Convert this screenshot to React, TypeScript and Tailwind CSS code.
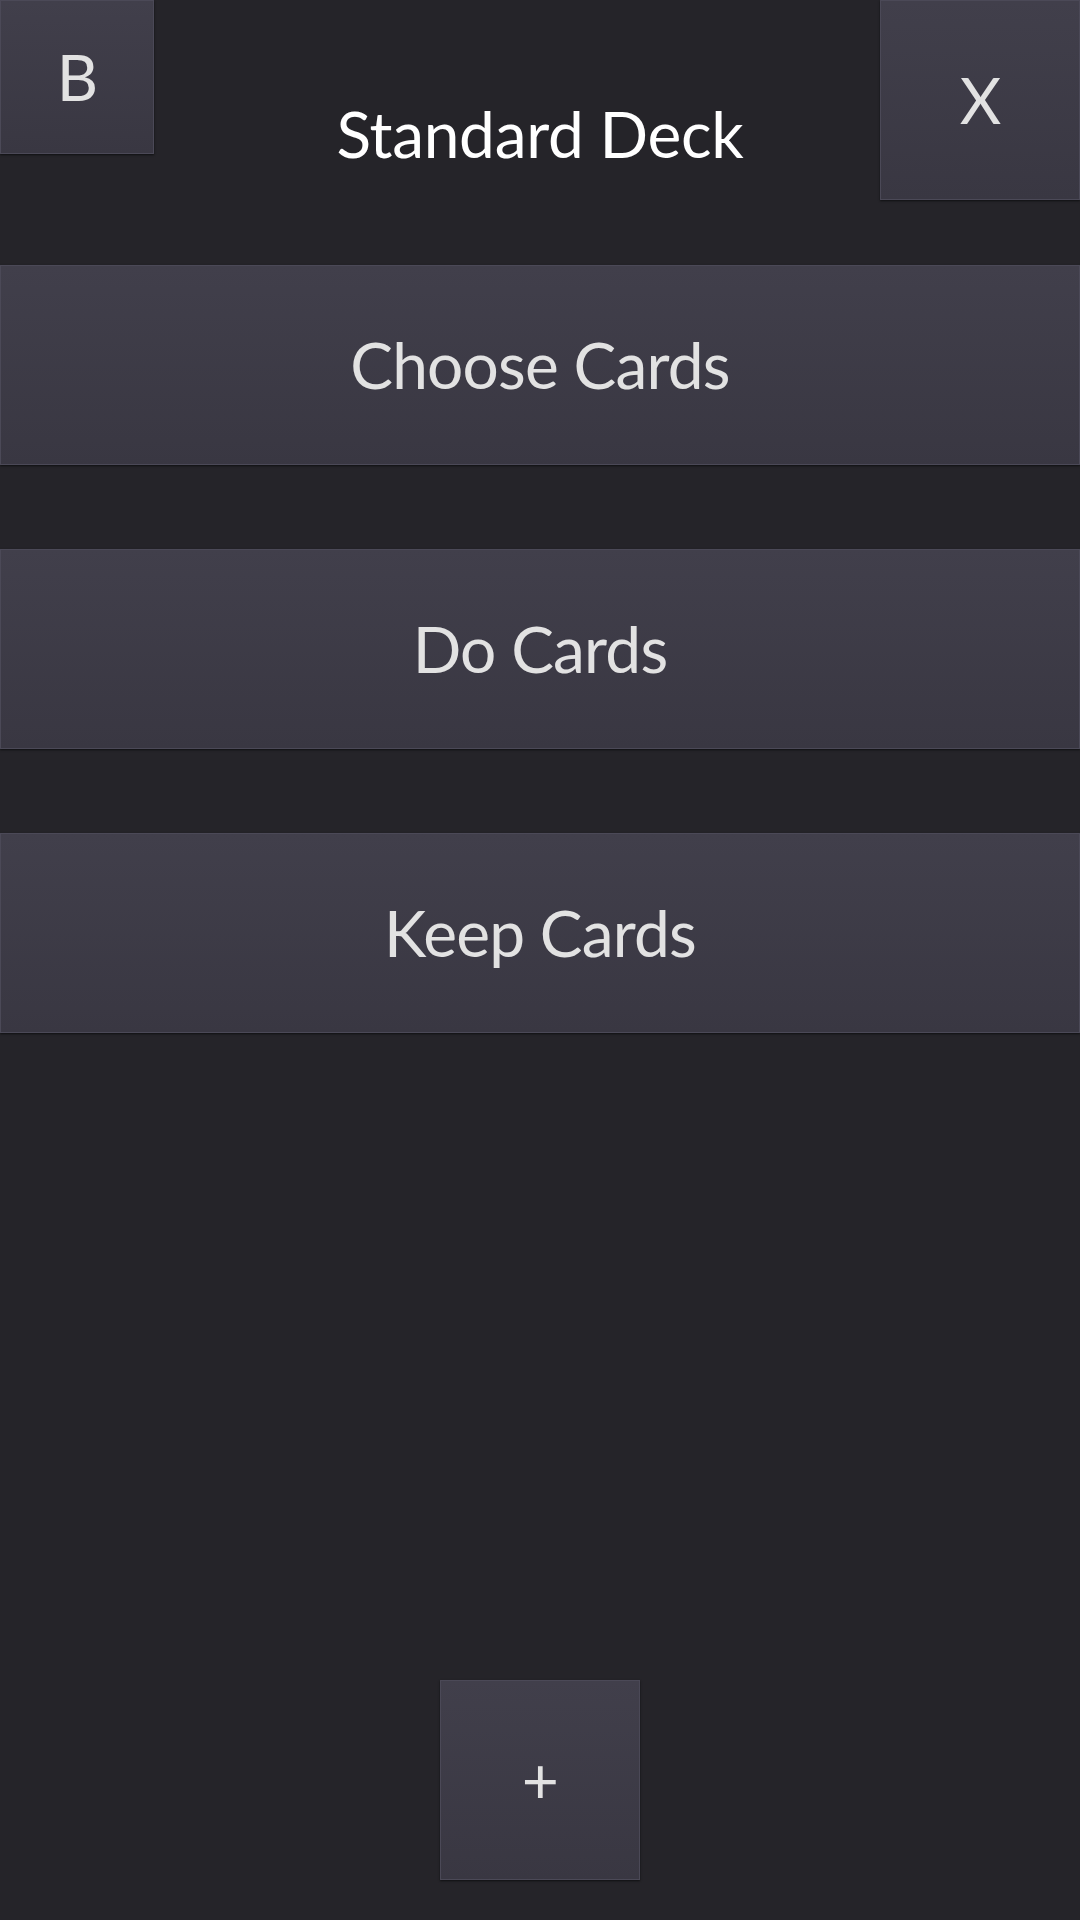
import React from 'react'

const tile =
  'flex items-center justify-center border border-[#4b4957] bg-gradient-to-b from-[#413f4b] to-[#393742] text-[#e2e2e2] shadow-[0_1px_2px_rgba(0,0,0,0.6)]'

export default function App() {
  const sections = ['Choose Cards', 'Do Cards', 'Keep Cards']

  return (
    <main
      className="min-h-[1920px] h-[1920px] flex flex-col bg-[#252429] text-[64px] leading-none tracking-[-0.8px]"
      style={{ fontFamily: 'Lato, "Open Sans", sans-serif' }}
    >
      {/* Header */}
      <div className="grid grid-cols-[200px_1fr_200px] h-[265px] items-start">
        <button className={`${tile} w-[154px] h-[154px]`}>B</button>
        <h1 className="text-center text-white pt-[102px] tracking-[-0.3px]">Standard Deck</h1>
        <button className={`${tile} w-[200px] h-[200px]`}>X</button>
      </div>

      {/* Menu */}
      <div className="flex flex-col gap-[84px]">
        {sections.map((label) => (
          <button key={label} className={`${tile} w-full h-[200px]`}>
            {label}
          </button>
        ))}
      </div>

      {/* Add */}
      <div className="mt-auto flex justify-center pb-[40px]">
        <button className={`${tile} w-[200px] h-[200px]`}>+</button>
      </div>
    </main>
  )
}
